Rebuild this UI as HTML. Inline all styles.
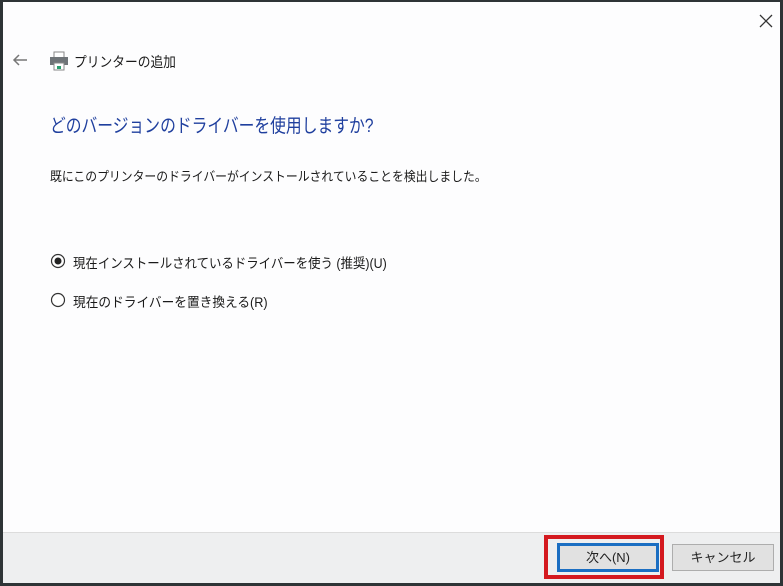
<!DOCTYPE html>
<html><head><meta charset="utf-8"><style>
*{margin:0;padding:0;box-sizing:border-box}
body{width:783px;height:586px;background:#2e3436;position:relative;overflow:hidden;font-family:"Liberation Sans","Noto Sans CJK JP",sans-serif;}
.win{position:absolute;left:3px;top:2px;width:777px;height:581px;background:#fdfdfe;}
.foot{position:absolute;left:0;top:530px;width:777px;height:51px;background:#eeeff0;border-top:1px solid #dcdcdc;}
.t{position:absolute;white-space:nowrap;color:#1a1a1a;transform-origin:0 0;}
.btn{position:absolute;background:#e1e1e1;border:1px solid #adadad;font-size:13px;text-align:center;color:#222;}
</style></head><body>
<div class="win">
 <svg style="position:absolute;left:756px;top:12px" width="14" height="14"><path d="M1 1L13 13M13 1L1 13" stroke="#333" stroke-width="1.3"/></svg>
 <svg style="position:absolute;left:9px;top:51px" width="16" height="14"><path d="M15 7H2M7 2L2 7L7 12" stroke="#777" stroke-width="1.5" fill="none"/></svg>
 <svg style="position:absolute;left:45px;top:48px" width="22" height="22"><rect x="6" y="2" width="10" height="6" fill="#fff" stroke="#888"/><rect x="2" y="7" width="18" height="8" fill="#6f7478"/><rect x="6" y="13" width="10" height="7" fill="#fff" stroke="#888"/><rect x="9" y="16" width="4" height="3" fill="#2a9d6e"/></svg>
 <div class="t" style="left:71px;top:50px;font-size:14px;transform:scaleX(0.91)">プリンターの追加</div>
 <div class="t" style="left:47px;top:109px;font-size:19px;color:#1f3f9e;transform:scaleX(0.83)">どのバージョンのドライバーを使用しますか?</div>
 <div class="t" style="left:47px;top:164px;font-size:13px;transform:scaleX(0.91)">既にこのプリンターのドライバーがインストールされていることを検出しました。</div>
 <svg style="position:absolute;left:47px;top:251px" width="16" height="16"><circle cx="8" cy="8" r="6.5" fill="#fff" stroke="#333" stroke-width="1.2"/><circle cx="8" cy="8" r="3.5" fill="#222"/></svg>
 <div class="t" style="left:70px;top:250px;font-size:13.5px;transform:scaleX(0.92)">現在インストールされているドライバーを使う (推奨)(U)</div>
 <svg style="position:absolute;left:47px;top:290px" width="16" height="16"><circle cx="8" cy="8" r="6.5" fill="#fff" stroke="#333" stroke-width="1.2"/></svg>
 <div class="t" style="left:70px;top:289px;font-size:13.5px;transform:scaleX(0.94)">現在のドライバーを置き換える(R)</div>
 <div class="foot"></div>
 <div style="position:absolute;left:541px;top:533px;width:120px;height:44px;border:4px solid #d4191f;"></div>
 <div class="btn" style="left:554px;top:541px;width:102px;height:29px;border:3px solid #1b6ec2;line-height:23px">次へ(N)</div>
 <div class="btn" style="left:669px;top:542px;width:102px;height:27px;line-height:25px">キャンセル</div>
</div>
</body></html>
